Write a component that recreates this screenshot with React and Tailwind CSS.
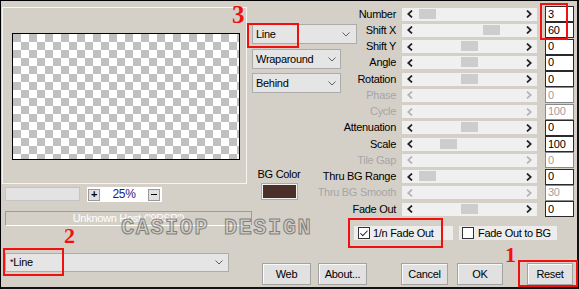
import { Check } from "lucide-react";

const PARAMS = [
  { label: "Number", value: "3", thumb: "ml-[1px]" },
  { label: "Shift X", value: "60", thumb: "ml-[65px]" },
  { label: "Shift Y", value: "0", thumb: "ml-[43px]" },
  { label: "Angle", value: "0", thumb: "ml-[43px]" },
  { label: "Rotation", value: "0", thumb: "ml-[43px]" },
  { label: "Phase", value: "0", disabled: true },
  { label: "Cycle", value: "100", disabled: true },
  { label: "Attenuation", value: "0", thumb: "ml-[43px]" },
  { label: "Scale", value: "100", thumb: "ml-[22px]" },
  { label: "Tile Gap", value: "0", disabled: true },
  { label: "Thru BG Range", value: "0", thumb: "ml-[1px]" },
  { label: "Thru BG Smooth", value: "30", disabled: true },
  { label: "Fade Out", value: "0", thumb: "ml-[43px]" },
];

const Chevron = ({ className = "" }) => (
  <svg width="8" height="5" viewBox="0 0 8 5" className={className}>
    <polyline points="0.5,0.5 4,4 7.5,0.5" fill="none" stroke="#606060" strokeWidth="1" />
  </svg>
);

const Arrow = ({ dir, disabled }) => (
  <svg width="6" height="8" viewBox="0 0 6 8">
    <polyline
      points={dir === "left" ? "5,0.5 1.2,4 5,7.5" : "1,0.5 4.8,4 1,7.5"}
      fill="none"
      stroke={disabled ? "#b4b4b4" : "#222"}
      strokeWidth="1.7"
    />
  </svg>
);

function Combo({ text, width, chevronClass = "mr-[6px]" }) {
  return (
    <div className={`${width} h-[20px] flex items-center justify-between bg-[#e5e5e5] border border-[#acacac] pl-[3px]`}>
      <span>{text}</span>
      <Chevron className={chevronClass} />
    </div>
  );
}

function Button({ label, width, className = "" }) {
  return (
    <div
      className={`${width} h-[22px] flex items-center justify-center bg-[#e1e1e1] border border-[#a3a3a3] shadow-[inset_1px_1px_0_#fafafa] ${className}`}
    >
      {label}
    </div>
  );
}

function ParamRow({ p }) {
  return (
    <div className="h-[16.25px] flex items-center">
      <div className={`w-[38px] flex justify-end whitespace-nowrap ${p.disabled ? "text-[#a6a6a6]" : "text-black"}`}>
        {p.label}
      </div>
      <div className="ml-[6px] w-[135px] h-[13px] flex bg-[#f0f0f0]">
        <div className="w-[16px] flex items-center justify-center">
          <Arrow dir="left" disabled={p.disabled} />
        </div>
        <div className="flex-1">
          {!p.disabled && <div className={`${p.thumb} w-[17px] h-[10px] mt-[1px] bg-[#cdcdcd]`} />}
        </div>
        <div className="w-[16px] flex items-center justify-center">
          <Arrow dir="right" disabled={p.disabled} />
        </div>
      </div>
      <div
        className={`ml-[8px] w-[29px] h-[16px] flex items-center pl-[2px] bg-white border ${
          p.disabled ? "border-[#8a8a8a] text-[#a0a0a0]" : "border-[#2a2a2a] text-black"
        }`}
      >
        {p.value}
      </div>
    </div>
  );
}

export default function App() {
  return (
    <div className="w-[579px] h-[289px] relative overflow-hidden bg-[#d4d0c8] text-[11px] leading-[13px] tracking-[-0.3px] text-black font-['Liberation_Sans',Arial,sans-serif] shadow-[inset_1px_1px_0_#000,inset_-2px_-2px_0_#111]">
      <div className="h-[247px] flex">
        {/* left: preview + zoom */}
        <div className="w-[252px] pl-[2px] flex flex-col">
          <div className="mt-[7px] w-[245px] h-[177px] border border-[#f6f5f2]">
            <div className="ml-[9px] mt-[25px] w-[228px] h-[127px] border border-black bg-[conic-gradient(#fff_25%,#c0c0c0_0_50%,#fff_0_75%,#c0c0c0_0)] bg-[length:16px_16px]" />
          </div>
          <div className="mt-[3px] flex items-start">
            <div className="ml-[3px] w-[75px] h-[14px] bg-[#e3e3e3] border border-[#c4c4c4]" />
            <div className="ml-[7px] w-[75px] h-[15px] bg-white flex items-center justify-between pl-[1px] pr-[2px]">
              <div className="w-[12px] h-[12px] bg-[#e1e1e1] border border-[#9a9a9a] flex items-center justify-center text-[11px] font-bold leading-none">
                +
              </div>
              <span className="text-[#1c1c84] text-[12px]">25%</span>
              <div className="w-[12px] h-[12px] bg-[#e1e1e1] border border-[#9a9a9a] flex items-center justify-center">
                <div className="w-[6px] h-[1px] bg-black" />
              </div>
            </div>
          </div>
          <div className="mt-[9px] ml-[3px] w-[247px] h-[15px] border border-[#9c9c9c] border-b-white flex items-center justify-center text-white text-[11px]">
            Unknown Host ("9PSP")
          </div>
        </div>

        {/* right: options + params */}
        <div className="flex flex-col">
          <div className="flex">
            <div className="w-[106px] flex flex-col">
              <div className="mt-[24px]">
                <Combo text="Line" width="w-[105px]" />
              </div>
              <div className="mt-[5px]">
                <Combo text="Wraparound" width="w-[89px]" chevronClass="mr-[4px]" />
              </div>
              <div className="mt-[4px]">
                <Combo text="Behind" width="w-[89px]" chevronClass="mr-[4px]" />
              </div>
              <div className="mt-[75px] w-[54px] flex flex-col items-center">
                <span className="whitespace-nowrap">BG Color</span>
                <div className="mt-[3px] w-[35px] h-[15px] bg-[#4a3028] border border-[#f2f2f2] outline outline-1 outline-[#a8a8a8]" />
              </div>
            </div>
            <div className="pt-[6px] flex flex-col">
              {PARAMS.map((p) => (
                <ParamRow key={p.label} p={p} />
              ))}
            </div>
          </div>
          <div className="mt-[9px] flex">
            <div className="ml-[102px] w-[99px] h-[14px] bg-[#ededed] flex items-center pl-[4px]">
              <div className="w-[12px] h-[12px] bg-white border border-[#333] flex items-center justify-center">
                <Check size={11} strokeWidth={2.5} color="#222" />
              </div>
              <span className="ml-[3px] whitespace-nowrap">1/n Fade Out</span>
            </div>
            <div className="ml-[6px] w-[98px] h-[14px] bg-[#ededed] flex items-center pl-[3px]">
              <div className="w-[12px] h-[12px] bg-white border border-[#333]" />
              <span className="ml-[4px] whitespace-nowrap">Fade Out to BG</span>
            </div>
          </div>
        </div>
      </div>

      {/* bottom row */}
      <div className="flex items-start">
        <div className="ml-[5px] mt-[6px] w-[224px] h-[19px] flex items-center justify-between bg-[#e5e5e5] border border-[#acacac] pl-[4px]">
          <span>
            <span className="text-[9px] align-top">*</span>Line
          </span>
          <Chevron className="mr-[5px]" />
        </div>
        <div className="mt-[16px] ml-[33px] flex">
          <Button label="Web" width="w-[49px]" />
          <Button label="About..." width="w-[49px]" className="ml-[7px]" />
          <Button label="Cancel" width="w-[47px]" className="ml-[34px]" />
          <Button label="OK" width="w-[46px]" className="ml-[9px]" />
          <Button label="Reset" width="w-[46px]" className="ml-[24px]" />
        </div>
      </div>

      {/* watermark */}
      <div className="absolute left-[121px] top-[217px] text-[22px] leading-[24px] font-bold tracking-[1.5px] font-['Liberation_Mono',monospace] text-[rgba(200,196,188,0.35)] [-webkit-text-stroke:1px_rgba(100,100,100,0.75)] pointer-events-none">
        CASIOP DESIGN
      </div>

      {/* red annotations */}
      <div className="absolute left-[232px] top-[2px] text-[25px] leading-[25px] font-bold text-[#f01010] font-['Liberation_Serif',serif]">3</div>
      <div className="absolute left-[247px] top-[23px] w-[52px] h-[25px] border-2 border-[#f01010]" />
      <div className="absolute left-[540px] top-[3px] w-[28px] h-[37px] border-2 border-[#f01010]" />
      <div className="absolute left-[348px] top-[218px] w-[95px] h-[30px] border-2 border-[#f01010]" />
      <div className="absolute left-[64px] top-[225px] text-[22px] leading-[22px] font-bold text-[#f01010] font-['Liberation_Serif',serif]">2</div>
      <div className="absolute left-[3px] top-[248px] w-[61px] h-[28px] border-2 border-[#f01010]" />
      <div className="absolute left-[505px] top-[244px] text-[22px] leading-[22px] font-bold text-[#f01010] font-['Liberation_Serif',serif]">1</div>
      <div className="absolute left-[518px] top-[260px] w-[60px] h-[27px] border-2 border-[#f01010]" />
    </div>
  );
}
